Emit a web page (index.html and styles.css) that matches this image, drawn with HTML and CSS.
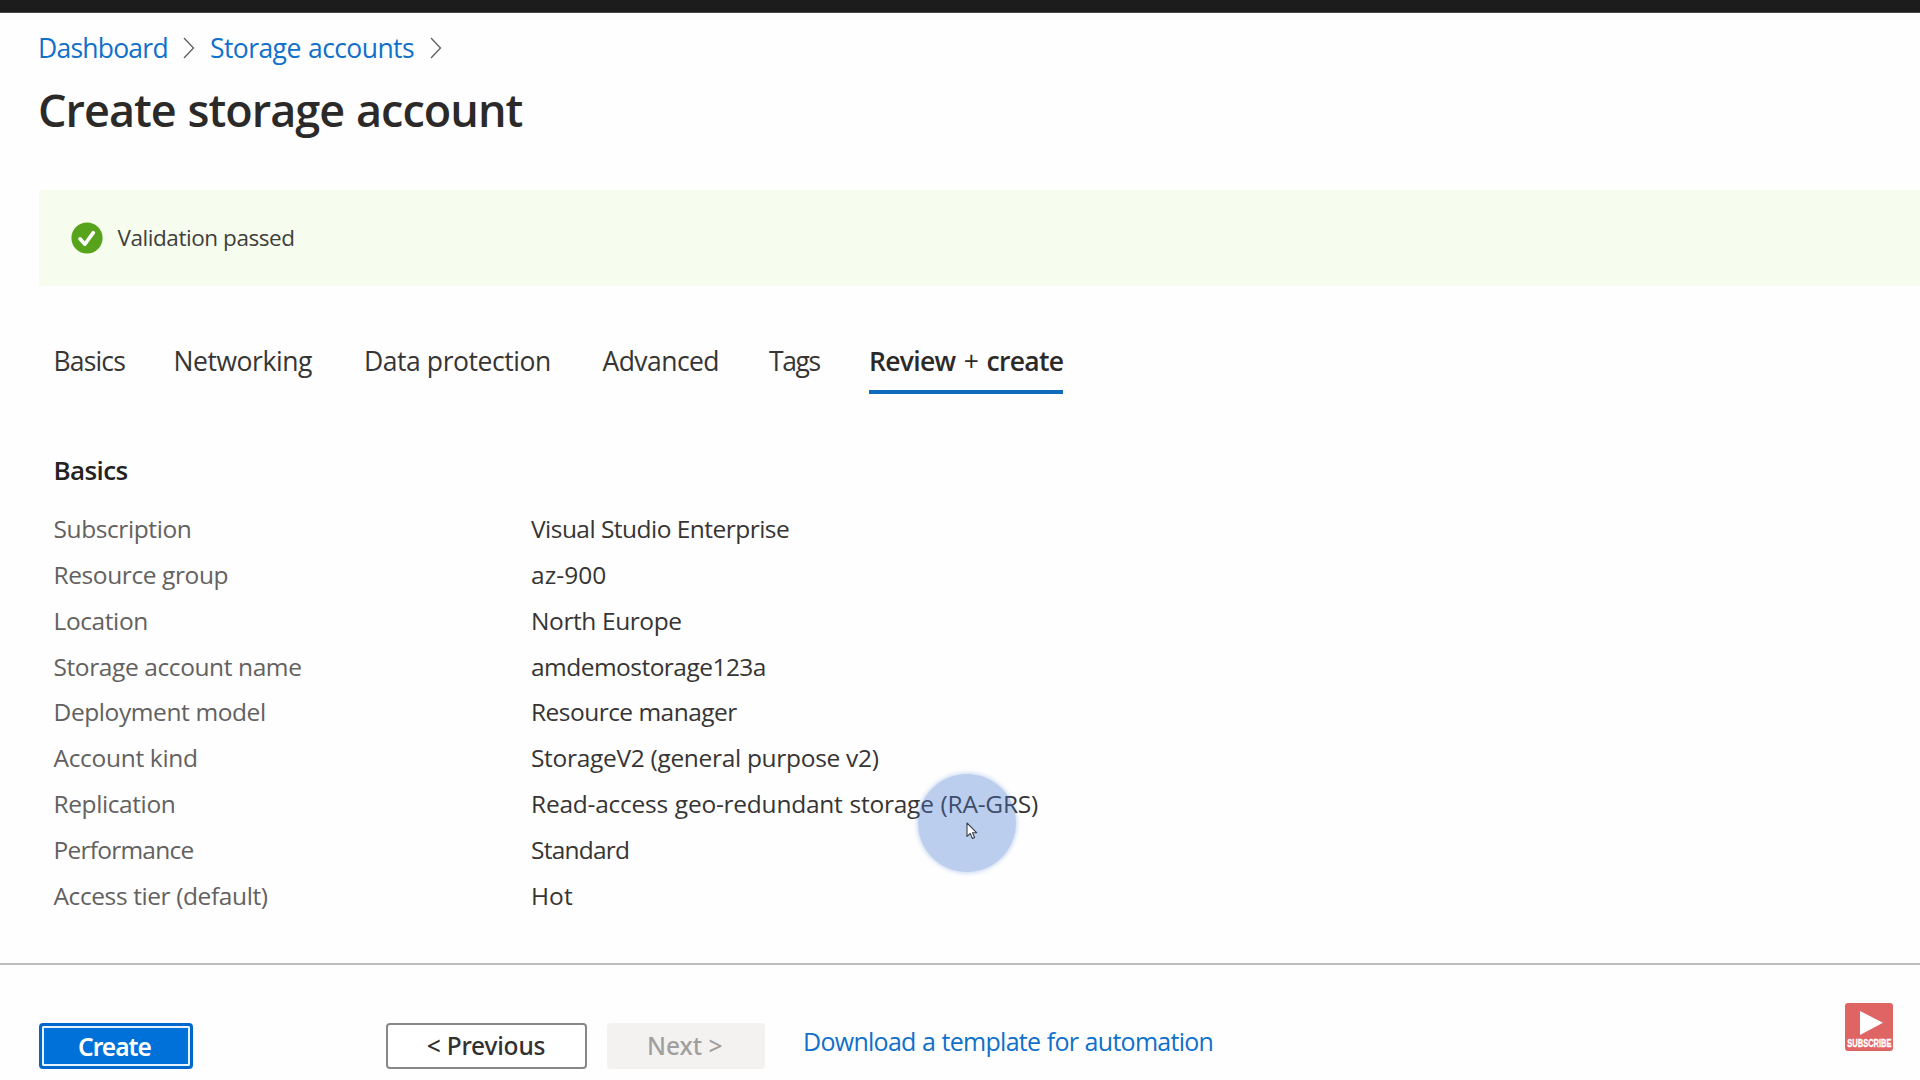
FILE: index.html
```html
<!DOCTYPE html>
<html lang="en">
<head>
<meta charset="utf-8">
<title>Create storage account</title>
<link rel="stylesheet" href="styles.css">
</head>
<body>
<div class="topbar"></div>
<main class="page">
  <nav class="breadcrumb">
    <a class="crumb crumb-dashboard">Dashboard</a>
    <svg class="chevron" viewBox="0 0 12 22"><path d="M1 1l9.5 10L1 21"/></svg>
    <a class="crumb crumb-storage">Storage accounts</a>
    <svg class="chevron" viewBox="0 0 12 22"><path d="M1 1l9.5 10L1 21"/></svg>
  </nav>
  <h1 class="title">Create storage account</h1>

  <div class="banner">
    <svg class="banner-icon" viewBox="0 0 32 32"><circle cx="16" cy="16" r="15.6" fill="#57a41c"/><path d="M9 16.8l4.9 5.4 8.4-11.6" fill="none" stroke="#fff" stroke-width="3.6" stroke-linecap="round" stroke-linejoin="round"/></svg>
    <span class="banner-text">Validation passed</span>
  </div>

  <div class="tabs">
    <span class="tab tab-basics">Basics</span>
    <span class="tab">Networking</span>
    <span class="tab">Data protection</span>
    <span class="tab tab-advanced">Advanced</span>
    <span class="tab tab-tags">Tags</span>
    <span class="tab tab-active">Review <span class="plus">+</span> create</span>
  </div>

  <h2 class="section-title">Basics</h2>
  <dl class="summary">
    <dt>Subscription</dt><dd class="snug">Visual Studio Enterprise</dd>
    <dt>Resource group</dt><dd class="open">az-900</dd>
    <dt>Location</dt><dd>North Europe</dd>
    <dt>Storage account name</dt><dd class="snug">amdemostorage123a</dd>
    <dt>Deployment model</dt><dd class="snug">Resource manager</dd>
    <dt class="relaxed">Account kind</dt><dd class="relaxed">StorageV2 (general purpose v2)</dd>
    <dt>Replication</dt><dd class="loose">Read-access geo-redundant storage (RA-GRS)</dd>
    <dt class="tight">Performance</dt><dd class="tight">Standard</dd>
    <dt>Access tier (default)</dt><dd class="open">Hot</dd>
  </dl>
</main>

<footer class="footer">
  <button class="btn btn-primary">Create</button>
  <button class="btn btn-outline">&lt; Previous</button>
  <button class="btn btn-disabled">Next &gt;</button>
  <a class="template-link">Download a template for automation</a>
</footer>

<div class="subscribe">
  <svg class="play" viewBox="0 0 23 24"><path d="M0 0l23 11.8L0 24z" fill="#fff"/></svg>
  <span class="subscribe-text">SUBSCRIBE</span>
</div>

<div class="spotlight"></div>
<svg class="cursor" viewBox="0 0 12 18"><path d="M1 1v13.4l3.2-2.9 2.2 5 2.2-1-2.1-4.7h4.3z" fill="#fff" stroke="#3a3f4c" stroke-width="1.1" stroke-linejoin="round"/></svg>
</body>
</html>
```
FILE: styles.css
```css
* { box-sizing: border-box; }

body {
  margin: 0;
  width: 1920px;
  height: 1080px;
  overflow: hidden;
  position: relative;
  display: flex;
  flex-direction: column;
  background: #fefefe;
  color: #363534;
  font-family: "Open Sans", "Noto Sans", sans-serif;
  font-size: 24.5px;
  white-space: nowrap;
}

.topbar {
  flex: none;
  height: 13px;
  background: #1c1c1c;
  border-bottom: 1px solid #4a4a4a;
}

.page {
  flex: none;
  height: 950px;
  padding: 17px 0 0 38px;
}

.breadcrumb {
  display: flex;
  align-items: center;
  height: 36px;
  font-size: 26.5px;
  line-height: 36px;
}
.crumb { color: #1070ca; }
.crumb-dashboard { width: 145px; letter-spacing: -.77px; }
.crumb-storage { width: 220px; margin-left: 15px; letter-spacing: -.58px; word-spacing: 1px; }
.chevron {
  width: 12px;
  height: 22px;
  fill: none;
  stroke: #605e5c;
  stroke-width: 1.3;
}

.title {
  margin: 14px 0 0;
  font-size: 45px;
  line-height: 60px;
  font-weight: 600;
  letter-spacing: -.98px;
  word-spacing: 1px;
  color: #2b2a29;
}

.banner {
  display: flex;
  align-items: center;
  gap: 15px;
  height: 96px;
  margin: 50px 0 0 1px;
  padding: 0 0 0 31.5px;
  background: #f7fdee;
  font-size: 22.5px;
  letter-spacing: -.44px;
}
.banner-icon { width: 32px; height: 32px; }
.banner-text { margin-top: -2px; color: #3f3f3c; }

.tabs {
  display: grid;
  grid-template-columns: 120px 190.5px 238.5px 166.5px 100px 194px;
  margin: 57px 0 0 15.5px;
  font-size: 26.5px;
  line-height: 36px;
  letter-spacing: -.43px;
}
.tab { height: 51px; }
.tab-basics { letter-spacing: -.84px; }
.tab-advanced { letter-spacing: -.56px; }
.tab-tags { letter-spacing: -1.4px; }
.tab-active {
  border-bottom: 4px solid #0f6cbd;
  font-weight: 600;
  letter-spacing: -.68px;
  word-spacing: 2px;
  color: #2b2a29;
}
.plus { font-weight: 400; }

.section-title {
  margin: 58px 0 0 15.5px;
  font-size: 26px;
  line-height: 36px;
  font-weight: 600;
  letter-spacing: -.6px;
  color: #242322;
}

.summary {
  display: grid;
  grid-template-columns: 477.5px 1fr;
  grid-auto-rows: 45.85px;
  margin: 18px 0 0 15.5px;
  line-height: 45.85px;
  letter-spacing: -.4px;
}
.summary dt { color: #636160; }
.summary dd { margin: 0; }
.summary .tight { letter-spacing: -.76px; }
.summary .snug { letter-spacing: -.53px; }
.summary .relaxed { letter-spacing: -.31px; }
.summary .loose { letter-spacing: -.24px; word-spacing: .8px; }
.summary .open { letter-spacing: .05px; }

.footer {
  flex: 1;
  display: flex;
  align-items: flex-start;
  padding: 58px 0 0 38.5px;
  border-top: 2px solid #bcbcbc;
}
.btn {
  height: 46px;
  padding: 0;
  border: 0;
  border-radius: 4px;
  font: 500 24.5px/42px "Noto Sans", sans-serif;
  color: #323130;
}
.btn-primary {
  width: 154px;
  padding: 0 2px 2px 0;
  background: #0071d8;
  color: #fff;
  font-weight: 600;
  letter-spacing: -.95px;
  border: 3px solid #0068cc;
  box-shadow: inset 0 0 0 2px #e6f4ff;
}
.btn-outline {
  width: 201px;
  margin-left: 193px;
  background: #fff;
  border: 2px solid #8a8886;
  letter-spacing: -.2px;
}
.btn-disabled {
  width: 158.5px;
  margin-left: 20px;
  padding-right: 2px;
  background: #f3f2f1;
  color: #a19f9d;
}
.template-link {
  margin-left: 38px;
  color: #1070ca;
  font-size: 25px;
  line-height: 36px;
  letter-spacing: -.72px;
  word-spacing: .6px;
}

/* Channel badge floating over the page */
.subscribe {
  position: absolute;
  left: 1845px;
  top: 1003px;
  width: 48px;
  height: 48px;
  padding-top: 8px;
  border-radius: 3px;
  background: #df6464;
  display: flex;
  flex-direction: column;
  align-items: center;
}
.play { width: 23px; height: 24px; margin-left: 4px; flex: none; }
.subscribe-text {
  margin-top: 2px;
  color: #fff;
  font: 700 11px/12px "Liberation Sans", sans-serif;
  -webkit-text-stroke: .4px #fff;
  transform: scaleX(.68);
}

/* Pointer highlight */
.spotlight {
  position: absolute;
  left: 918px;
  top: 774px;
  width: 98px;
  height: 98px;
  border-radius: 50%;
  background: rgba(73, 123, 209, .36);
  box-shadow: 0 0 4px 1px rgba(73, 123, 209, .3);
}
.cursor {
  position: absolute;
  left: 966px;
  top: 822px;
  width: 12px;
  height: 18px;
}
```
